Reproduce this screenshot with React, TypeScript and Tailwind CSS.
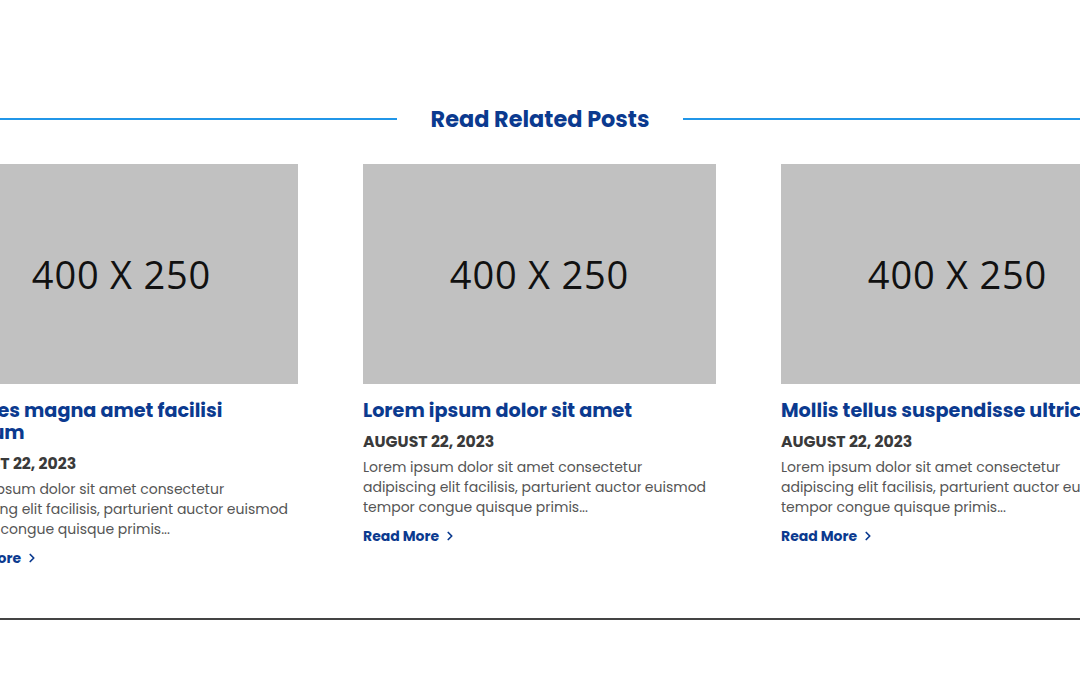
import { ChevronRight } from 'lucide-react';

type Post = {
  id: number;
  title: string;
  date: string;
  excerpt: string;
};

const posts: Post[] = [
  {
    id: 1,
    title: 'Ultrices magna amet facilisi quorum',
    date: 'AUGUST 22, 2023',
    excerpt:
      'Lorem ipsum dolor sit amet consectetur adipiscing elit facilisis, parturient auctor euismod tempor congue quisque primis...',
  },
  {
    id: 2,
    title: 'Lorem ipsum dolor sit amet',
    date: 'AUGUST 22, 2023',
    excerpt:
      'Lorem ipsum dolor sit amet consectetur adipiscing elit facilisis, parturient auctor euismod tempor congue quisque primis...',
  },
  {
    id: 3,
    title: 'Mollis tellus suspendisse ultricies',
    date: 'AUGUST 22, 2023',
    excerpt:
      'Lorem ipsum dolor sit amet consectetur adipiscing elit facilisis, parturient auctor euismod tempor congue quisque primis...',
  },
];

const font = "font-['Poppins','Open_Sans',sans-serif]";

function PostCard({ post }: { post: Post }) {
  return (
    <article className="w-[353px] flex-shrink-0">
      {/* placeholder thumbnail */}
      <div className="h-[220px] bg-[#c1c1c1] flex items-center justify-center">
        <span className="font-['Open_Sans',sans-serif] text-[38px] text-[#111] tracking-[0.8px]">
          400 X 250
        </span>
      </div>

      <h3 className="mt-4 text-[19.2px] leading-[22px] font-bold text-[#0b3a8f]">
        {post.title}
      </h3>
      <p className="mt-[9px] text-[15.7px] leading-[22px] font-bold text-[#3a3a3a]">
        {post.date}
      </p>
      <p className="mt-[4px] text-[14px] leading-[20px] text-[#555]">
        {post.excerpt}
      </p>
      <a
        href="#"
        className="mt-[9px] inline-flex items-center gap-1 text-[14px] leading-[20px] font-bold text-[#0b3a8f]"
      >
        Read More
        <ChevronRight size={14} strokeWidth={3} />
      </a>
    </article>
  );
}

export default function App() {
  return (
    <div className={`min-h-[675px] bg-white overflow-hidden ${font}`}>
      {/* section title with rules */}
      <div className="pt-[104px] flex items-center gap-[34px]">
        <div className="flex-1 h-[2px] bg-[#2196e8]" />
        <h2 className="text-[22.4px] leading-[30px] font-bold text-[#0b3a8f]">
          Read Related Posts
        </h2>
        <div className="flex-1 h-[2px] bg-[#2196e8]" />
      </div>

      {/* carousel track */}
      <div className="mt-[30px] ml-[-55px] flex gap-[65px] items-start">
        {posts.map(post => (
          <PostCard key={post.id} post={post} />
        ))}
      </div>

      <div className="mt-[48px] h-[2px] bg-[#444]" />
    </div>
  );
}
